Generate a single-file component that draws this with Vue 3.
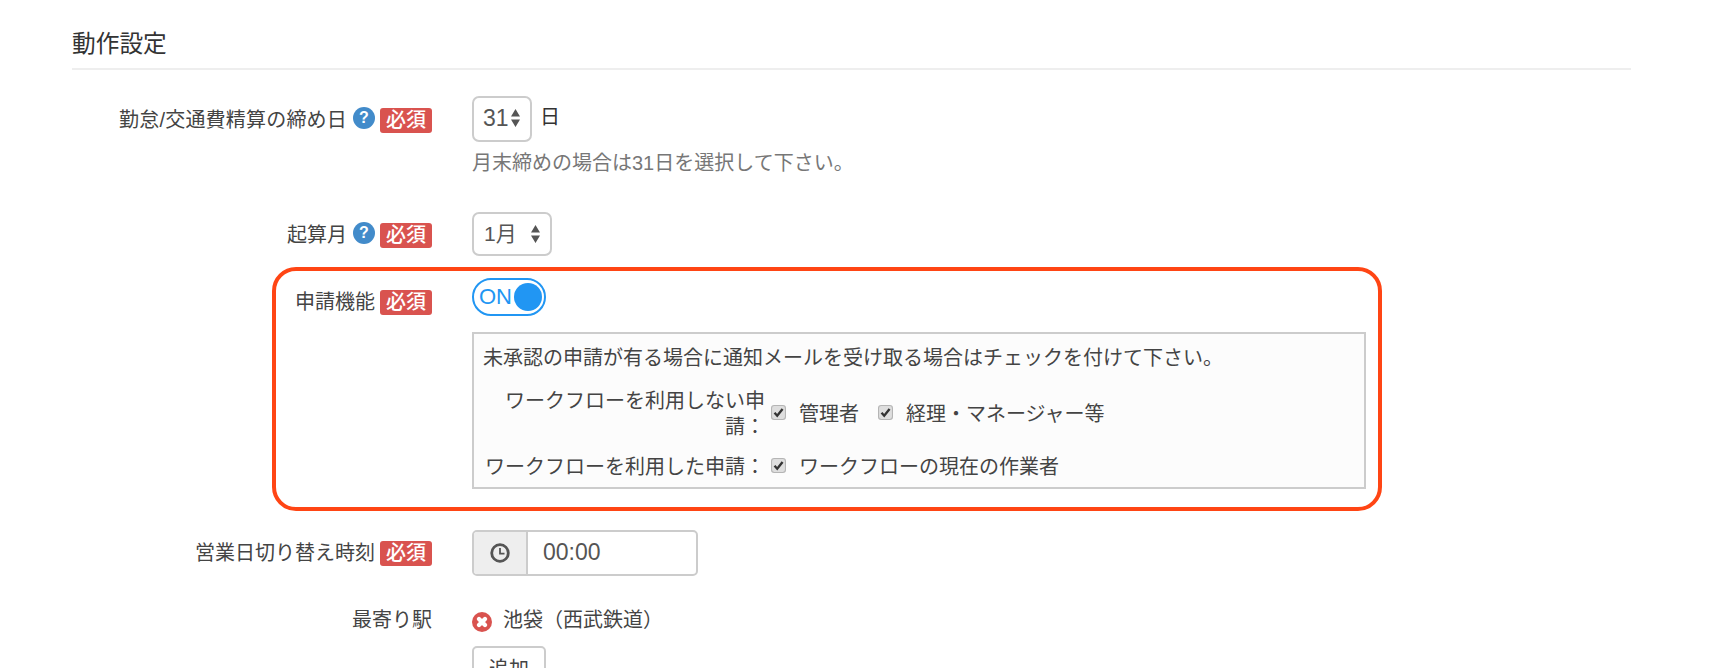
<script setup>
const checks = [
  { th: 'ワークフローを利用しない申請：', items: ['管理者', '経理・マネージャー等'] },
  { th: 'ワークフローを利用した申請：', items: ['ワークフローの現在の作業者'] }
]
</script>

<template>
  <div class="page">
    <h3 class="title">動作設定</h3>

    <div class="row row-close">
      <div class="label label-close"><span class="wide">勤怠/交通費精算の締め日</span><span class="help">?</span><span class="req">必須</span></div>
      <div class="field">
        <div class="inline">
          <div class="select s-day">
            <span>31</span>
            <svg class="arrows" viewBox="0 0 10 18"><path d="M5 0 9.500 7.500H.5zM5 18 .5 10.500h9z" /></svg>
          </div>
          <span class="unit">日</span>
        </div>
        <p class="note">月末締めの場合は31日を選択して下さい。</p>
      </div>
    </div>

    <div class="row row-month">
      <div class="label label-month"><span>起算月</span><span class="help">?</span><span class="req">必須</span></div>
      <div class="field">
        <div class="select s-month">
          <span>1月</span>
          <svg class="arrows" viewBox="0 0 10 18"><path d="M5 0 9.500 7.500H.5zM5 18 .5 10.500h9z" /></svg>
        </div>
      </div>
    </div>

    <div class="row row-apply">
      <div class="highlight"></div>
      <div class="label label-apply"><span>申請機能</span><span class="req">必須</span></div>
      <div class="field">
        <div class="toggle"><span>ON</span><i class="knob"></i></div>
        <div class="box">
          <p class="box-lead">未承認の申請が有る場合に通知メールを受け取る場合はチェックを付けて下さい。</p>
          <div v-for="c in checks" :key="c.th" class="check-row">
            <div class="check-th">{{ c.th }}</div>
            <div class="check-items">
              <label v-for="item in c.items" :key="item" class="check">
                <svg class="cb" viewBox="0 0 14 14">
                  <rect x=".5" y=".5" width="13" height="13" rx="2.500" fill="#dedede" stroke="#b5b5b5" />
                  <path d="M3.300 7.200 5.800 10 10.800 3.700" fill="none" stroke="#333" stroke-width="2.200" />
                </svg>
                <span>{{ item }}</span>
              </label>
            </div>
          </div>
        </div>
      </div>
    </div>

    <div class="row row-time">
      <div class="label label-time"><span>営業日切り替え時刻</span><span class="req">必須</span></div>
      <div class="field">
        <div class="time">
          <div class="addon">
            <svg width="20" height="20" viewBox="0 0 20 20">
              <circle cx="10" cy="10" r="8.300" fill="none" stroke="#555" stroke-width="2.800" />
              <path d="M10 5v5.600h4.500" fill="none" stroke="#555" stroke-width="1.800" />
            </svg>
          </div>
          <div class="time-value">00:00</div>
        </div>
      </div>
    </div>

    <div class="row row-station">
      <div class="label label-station"><span>最寄り駅</span></div>
      <div class="field">
        <div class="station">
          <svg class="remove" width="20" height="20" viewBox="0 0 20 20">
            <circle cx="10" cy="10" r="10" fill="#d9534f" />
            <path d="M7 7 13 13M13 7 7 13" stroke="#fff" stroke-width="4.400" stroke-linecap="round" />
          </svg>
          <span>池袋（西武鉄道）</span>
        </div>
        <button class="add" type="button">追加</button>
      </div>
    </div>
  </div>
</template>

<style>
html, body { margin: 0; background: #fff; overflow: hidden; }
</style>

<style scoped>
.page {
  box-sizing: border-box;
  width: 1732px;
  height: 668px;
  padding-left: 72px;
  overflow: hidden;
  font-family: "Liberation Sans", "Noto Sans CJK JP", sans-serif;
  font-size: 20px;
  line-height: 26px;
  color: #444;
}
.title {
  box-sizing: border-box;
  width: 1559px;
  height: 70px;
  margin: 0;
  padding-top: 27px;
  border-bottom: 2px solid #eee;
  font-size: 23.700px;
  line-height: 34px;
  font-weight: 400;
  color: #333;
}
.row { display: flex; gap: 40px; position: relative; }
.row-close { margin-top: 26px; }
.row-month { margin-top: 35px; }
.row-apply { margin-top: 20px; }
.row-time { margin-top: 41px; }
.row-station { margin-top: 30px; }
.label {
  width: 360px;
  flex: none;
  display: flex;
  justify-content: flex-end;
  align-items: center;
}
.wide { letter-spacing: .2px; }
.label-close { height: 48px; }
.label-month { height: 46px; }
.label-apply { height: 48px; }
.label-time { height: 46px; }
.label-station { height: 28px; }
.help {
  width: 22px;
  height: 22px;
  margin: -4px 0 0 6px;
  border-radius: 50%;
  background: #428bca;
  color: #fff;
  font-size: 16px;
  font-weight: 700;
  line-height: 22px;
  letter-spacing: 0;
  text-align: center;
}
.req {
  width: 52px;
  height: 25px;
  margin-left: 5px;
  border-radius: 3px;
  background: #d9534f;
  color: #fff;
  font-size: 20px;
  font-weight: 500;
  line-height: 25px;
  text-align: center;
}
.inline { display: flex; align-items: center; gap: 8px; }
.unit { margin-top: -4px; color: #333; }
.select {
  box-sizing: border-box;
  display: flex;
  justify-content: space-between;
  align-items: center;
  height: 44px;
  border: 2px solid #ccc;
  border-radius: 7px;
  color: #555;
}
.s-day { width: 60px; height: 46px; padding: 0 9px 0 9px; font-size: 23px; }
.s-day span { margin-top: -3px; }
.s-day .arrows { margin-top: -3px; }
.s-month { width: 80px; padding: 0 9px 0 10px; font-size: 21px; }
.arrows { width: 11px; height: 18px; fill: #555; flex: none; }
.note { margin: 7px 0 0; line-height: 28px; color: #777; }
.highlight {
  position: absolute;
  left: 200px;
  top: -11px;
  width: 1110px;
  height: 244px;
  box-sizing: border-box;
  border: 4px solid #ff4514;
  border-radius: 24px;
}
.toggle {
  box-sizing: border-box;
  display: flex;
  align-items: center;
  justify-content: space-between;
  width: 74px;
  height: 38px;
  padding: 0 2px 0 5px;
  border: 2px solid #2196f3;
  border-radius: 19px;
  color: #2196f3;
  font-size: 22px;
}
.knob { width: 28px; height: 28px; border-radius: 50%; background: #2196f3; }
.box {
  box-sizing: border-box;
  width: 894px;
  height: 157px;
  margin-top: 16px;
  padding: 11px 9px 5px;
  border: 2px solid #ccc;
  background: #fcfcfc;
}
.box-lead { margin: 0; color: #444; }
.check-row {
  display: grid;
  grid-template-columns: 280px 1fr;
  align-items: center;
  margin-top: 17px;
  padding-left: 2px;
}
.check-row + .check-row { margin-top: 14px; }
.check-th { text-align: right; }
.check-items { display: flex; gap: 19px; padding-left: 6px; }
.check { display: flex; align-items: center; gap: 13px; }
.cb { width: 15px; height: 15px; margin-top: -3px; flex: none; }
.time {
  box-sizing: border-box;
  display: flex;
  width: 226px;
  height: 46px;
  border: 2px solid #ccc;
  border-radius: 5px;
  overflow: hidden;
  color: #555;
}
.addon {
  display: flex;
  align-items: center;
  justify-content: center;
  width: 52px;
  background: #eee;
  border-right: 2px solid #ccc;
}
.time-value { padding: 7px 0 0 15px; font-size: 23px; }
.station { display: flex; align-items: center; gap: 11px; height: 28px; }
.remove { margin-top: 4px; flex: none; }
.add {
  display: block;
  box-sizing: border-box;
  width: 74px;
  height: 46px;
  margin-top: 12px;
  padding: 0;
  border: 2px solid #ccc;
  border-radius: 5px;
  background: #fff;
  color: #444;
  font: inherit;
}
</style>
